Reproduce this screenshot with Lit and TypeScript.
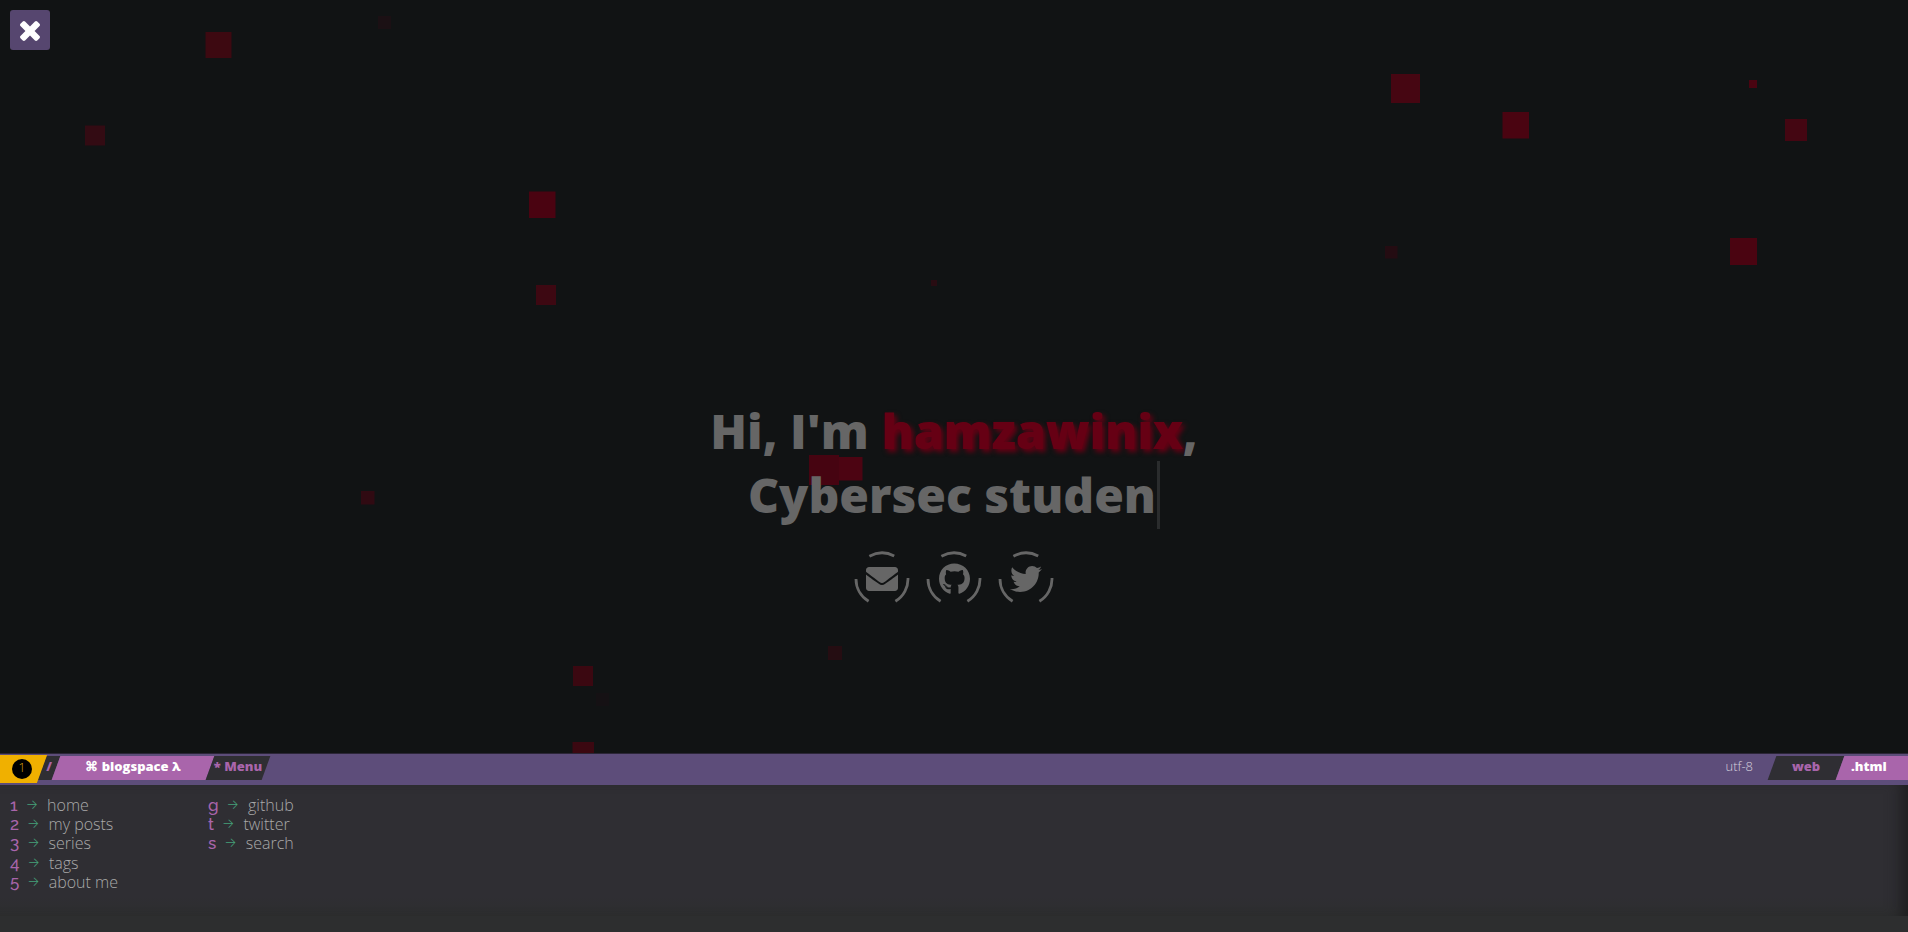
import { LitElement, html, css, svg } from "lit";
import { customElement } from "lit/decorators.js";

interface Particle { x: number; y: number; size: number; fill: string; }
interface MenuEntry { key: string; label: string; href: string; }

const PARTICLES: Particle[] = [
  { x: 205.5, y: 32, size: 26, fill: "#3d0911" },
  { x: 85, y: 125.5, size: 20, fill: "#330b13" },
  { x: 378, y: 16, size: 13, fill: "#1b1014" },
  { x: 529, y: 191.5, size: 26.5, fill: "#4a0311" },
  { x: 536, y: 285, size: 20, fill: "#3d0812" },
  { x: 931, y: 280, size: 6, fill: "#280c12" },
  { x: 1391, y: 74, size: 29, fill: "#460612" },
  { x: 1502.5, y: 112, size: 26.5, fill: "#4a0411" },
  { x: 1749, y: 80, size: 8, fill: "#4a0411" },
  { x: 1785, y: 119, size: 22, fill: "#440612" },
  { x: 1385, y: 246, size: 12.5, fill: "#240c12" },
  { x: 1730, y: 238, size: 27, fill: "#4a0411" },
  { x: 809, y: 455, size: 30, fill: "#460411" },
  { x: 839, y: 457, size: 23.5, fill: "#4c0412" },
  { x: 361, y: 491, size: 13.5, fill: "#300a12" },
  { x: 573, y: 666, size: 20, fill: "#3b0811" },
  { x: 596, y: 693, size: 13, fill: "#151114" },
  { x: 828, y: 646, size: 14, fill: "#250d12" },
  { x: 572.5, y: 742, size: 21.5, fill: "#3b0811" },
];

const PAGES: MenuEntry[] = [
  { key: "1", label: "home", href: "#home" },
  { key: "2", label: "my posts", href: "#posts" },
  { key: "3", label: "series", href: "#series" },
  { key: "4", label: "tags", href: "#tags" },
  { key: "5", label: "about me", href: "#about" },
];

const ACTIONS: MenuEntry[] = [
  { key: "g", label: "github", href: "#github" },
  { key: "t", label: "twitter", href: "#twitter" },
  { key: "s", label: "search", href: "#search" },
];

const CLOSE = "M1490 1322q0 40-28 68l-136 136q-28 28-68 28t-68-28l-294-294-294 294q-28 28-68 28t-68-28l-136-136q-28-28-28-68t28-68l294-294-294-294q-28-28-28-68t28-68l136-136q28-28 68-28t68 28l294 294 294-294q28-28 68-28t68 28l136 136q28 28 28 68t-28 68l-294 294 294 294q28 28 28 68z";

const SOCIAL = [
  {
    label: "Email",
    width: 512,
    path: "M502.3 190.8c3.9-3.1 9.7-.2 9.7 4.7V400c0 26.500-21.500 48-48 48H48c-26.500 0-48-21.500-48-48V195.600c0-5 5.700-7.800 9.700-4.700 22.400 17.400 52.100 39.500 154.100 113.600 21.100 15.400 56.700 47.800 92.200 47.600 35.700.300 72-32.800 92.300-47.600 102-74.100 131.600-96.300 154-113.700zM256 320c23.200.400 56.600-29.200 73.400-41.400 132.700-96.300 142.800-104.700 173.400-128.700 5.800-4.500 9.200-11.500 9.200-18.900v-19c0-26.500-21.500-48-48-48H48c-26.500 0-48 21.500-48 48v19c0 7.400 3.400 14.300 9.200 18.900 30.600 23.900 40.700 32.400 173.400 128.700 16.800 12.200 50.200 41.800 73.400 41.400z",
  },
  {
    label: "GitHub",
    width: 496,
    path: "M165.9 397.4c0 2-2.3 3.6-5.2 3.6-3.3.3-5.6-1.3-5.6-3.6 0-2 2.3-3.6 5.2-3.6 3-.3 5.6 1.3 5.6 3.6zm-31.100-4.500c-.7 2 1.300 4.300 4.300 4.900 2.600 1 5.600 0 6.200-2s-1.300-4.300-4.300-5.200c-2.600-.7-5.500.300-6.200 2.300zm44.200-1.700c-2.900.7-4.900 2.600-4.600 4.900.300 2 2.900 3.300 5.900 2.600 2.900-.7 4.900-2.600 4.600-4.600-.300-1.900-3-3.200-5.900-2.900zM244.800 8C106.100 8 0 113.300 0 252c0 110.900 69.800 205.800 169.500 239.200 12.800 2.300 17.300-5.600 17.300-12.100 0-6.200-.3-40.400-.3-61.400 0 0-70 15-84.700-29.800 0 0-11.400-29.100-27.800-36.600 0 0-22.900-15.700 1.600-15.400 0 0 24.900 2 38.600 25.800 21.900 38.600 58.600 27.500 72.900 20.900 2.300-16 8.800-27.100 16-33.700-55.900-6.200-112.300-14.300-112.300-110.500 0-27.500 7.600-41.300 23.600-58.900-2.600-6.500-11.100-33.300 2.600-67.900 20.900-6.500 69 27 69 27 20-5.600 41.500-8.500 62.800-8.500s42.800 2.900 62.800 8.500c0 0 48.100-33.600 69-27 13.700 34.700 5.200 61.400 2.600 67.900 16 17.700 25.800 31.500 25.800 58.900 0 96.500-58.900 104.200-114.800 110.500 9.200 7.900 17 22.900 17 46.400 0 33.700-.3 75.400-.3 83.600 0 6.500 4.600 14.400 17.300 12.100C428.200 457.800 496 362.900 496 252 496 113.300 383.500 8 244.800 8zM97.200 352.900c-1.300 1-1 3.300.7 5.200 1.600 1.600 3.900 2.300 5.200 1 1.300-1 1-3.300-.7-5.200-1.600-1.600-3.900-2.300-5.200-1zm-10.800-8.100c-.7 1.300.3 2.900 2.300 3.900 1.600 1 3.600.7 4.300-.7.7-1.300-.3-2.900-2.300-3.900-2-.6-3.600-.3-4.300.7zm32.400 35.600c-1.600 1.300-1 4.300 1.300 6.200 2.300 2.300 5.200 2.600 6.500 1 1.300-1.300.7-4.300-1.300-6.200-2.200-2.300-5.200-2.600-6.500-1zm-11.400-14.700c-1.600 1-1.600 3.600 0 5.900 1.600 2.300 4.300 3.300 5.600 2.300 1.600-1.300 1.600-3.900 0-6.200-1.400-2.300-4-3.300-5.600-2z",
  },
  {
    label: "Twitter",
    width: 512,
    path: "M459.37 151.716c.325 4.548.325 9.097.325 13.645 0 138.720-105.583 298.558-298.558 298.558-59.452 0-114.680-17.219-161.137-47.106 8.447.974 16.568 1.299 25.340 1.299 49.055 0 94.213-16.568 130.274-44.832-46.132-.975-84.792-31.188-98.112-72.772 6.498.974 12.995 1.624 19.818 1.624 9.421 0 18.843-1.300 27.614-3.573-48.081-9.747-84.143-51.980-84.143-102.985v-1.299c13.969 7.797 30.214 12.670 47.431 13.319-28.264-18.843-46.781-51.005-46.781-87.391 0-19.492 5.197-37.360 14.294-52.954 51.655 63.675 129.300 105.258 216.365 109.807-1.624-7.797-2.599-15.918-2.599-24.040 0-57.828 46.782-104.934 104.934-104.934 30.213 0 57.502 12.670 76.670 33.137 23.715-4.548 46.456-13.320 66.599-25.340-7.798 24.366-24.366 44.833-46.132 57.827 21.117-2.273 41.584-8.122 60.426-16.243-14.292 20.791-32.161 39.308-52.628 54.253z",
  },
];

@customElement("app-root")
export class AppRoot extends LitElement {
  static styles = css`
    :host {
      display: grid;
      grid-template-rows: 1fr auto;
      min-height: 100vh;
      position: relative;
      background: #111314;
      font-family: "Open Sans", sans-serif;
    }
    * { box-sizing: border-box; }
    a { color: inherit; text-decoration: none; }
    .particles {
      position: absolute;
      inset: 0;
      width: 100%;
      height: 100%;
    }
    .close {
      position: absolute;
      top: 10px;
      left: 10px;
      width: 40px;
      height: 40px;
      display: grid;
      place-items: center;
      padding: 2px 0 0;
      border: 0;
      border-radius: 3px;
      background: #56466f;
      color: #fff;
    }
    .close svg { width: 20px; height: 20px; fill: currentColor; }
    .hero {
      position: relative;
      display: flex;
      flex-direction: column;
      align-items: center;
      justify-content: flex-end;
      padding-bottom: 146px;
      color: #666;
    }
    h1 {
      margin: 0 0 22px;
      font-size: 48px;
      line-height: 64px;
      font-weight: 800;
      text-align: center;
    }
    .name { color: #660014; text-shadow: 3px 3px 5px #660014; }
    .typed {
      display: block;
      width: fit-content;
      margin: -2px auto 0;
      padding: 2px 1px 2px 0;
      border-right: 3px solid #2a2c2d;
    }
    .social { display: flex; gap: 16px; }
    .social a {
      display: grid;
      place-items: center;
      width: 56px;
      height: 56px;
    }
    .social svg { grid-area: 1 / 1; }
    .ring { width: 56px; height: 56px; fill: none; stroke: #666; stroke-width: 2.8; }
    .glyph { height: 32px; fill: #666; }

    .menu { position: relative; background: #2d2e2f; padding-bottom: 16px; }
    .bar {
      display: flex;
      align-items: flex-start;
      height: 32px;
      padding-top: 2px;
      border-top: 1px solid #2c2638;
      background: #5d4d7a;
      font-size: 13px;
      line-height: 20px;
      font-weight: 800;
      overflow: hidden;
    }
    .seg {
      position: relative;
      z-index: 0;
      height: 24px;
      display: flex;
      justify-content: center;
      color: #a965ab;
    }
    .seg::before {
      content: "";
      position: absolute;
      inset: 0;
      z-index: -1;
      transform: skewX(-20deg);
      background: #2f2e33;
    }
    .pink { color: #fff; }
    .pink::before { background: #a965ab; }
    .count { width: 42px; height: 28px; padding: 4px 0 0 12px; justify-content: flex-start; margin-top: -1px; z-index: 1; }
    .count::before { background: #f0b000; left: -12px; }
    .badge {
      width: 20px;
      height: 20px;
      border-radius: 50%;
      background: #000;
      color: #d99f0c;
      font-weight: 300;
      line-height: 16px;
      text-align: center;
    }
    .slash { width: 14px; }
    .blog { width: 154px; }
    .current { width: 56px; }
    .fill { flex: 1; }
    .enc { color: #d5d0dd; font-weight: 300; margin-right: 19px; }
    .mode { width: 68px; }
    .ext { width: 68px; justify-content: flex-start; padding-left: 11px; }
    .ext::before { right: -12px; }

    .panel {
      display: flex;
      height: 131px;
      padding: 11px 10px 0;
      background: linear-gradient(#2f2e33 85%, #2d2e2f);
      box-shadow: inset -16px 0 16px -10px #1d1d1e;
      color: #a9a9a9;
      font-size: 16px;
      line-height: 1.2;
      font-weight: 300;
    }
    ul { margin: 0; padding: 0; list-style: none; width: 198px; }
    li a { display: flex; }
    .key, .arrow { height: 19px; line-height: 19px; }
    .key { font-family: "Raleway", "Lato", sans-serif; font-size: 17px; font-weight: 500; color: #a965ab; margin-right: 8px; }
    .arrow { font-family: "Inter", sans-serif; font-size: 13px; line-height: 17px; font-weight: 300; color: #45a07a; margin-right: 9px; }
  `;

  private entries(list: MenuEntry[]) {
    return html`<ul>
      ${list.map((e) => html`<li><a href=${e.href}><span class="key">${e.key}</span><span class="arrow">→</span><span>${e.label}</span></a></li>`)}
    </ul>`;
  }

  render() {
    return html`
      <svg class="particles" aria-hidden="true">
        ${PARTICLES.map((p) => svg`<rect x=${p.x} y=${p.y} width=${p.size} height=${p.size} fill=${p.fill}></rect>`)}
      </svg>
      <main class="hero">
        <h1>Hi, I'm <span class="name">hamzawinix</span>,<span class="typed">Cybersec studen</span></h1>
        <nav class="social" aria-label="Social">
          ${SOCIAL.map((s) => html`<a href="#" aria-label=${s.label}>
            <svg class="ring" viewBox="-28 -28 56 56">
              <path d="M-12.600-22.700A26 26 0 0 1 12.200-23M26-1A26 26 0 0 1 13.400 22.300M-26 0A26 26 0 0 0-13.400 22.300"></path>
            </svg>
            <svg class="glyph" viewBox="0 0 ${s.width} 512"><path d=${s.path}></path></svg>
          </a>`)}
        </nav>
      </main>
      <footer class="menu">
        <div class="bar">
          <span class="seg count"><span class="badge">1</span></span>
          <span class="seg slash">/</span>
          <span class="seg pink blog">⌘ blogspace λ</span>
          <span class="seg current">* Menu</span>
          <span class="fill"></span>
          <span class="enc">utf-8</span>
          <span class="seg mode">web</span>
          <span class="seg pink ext">.html</span>
        </div>
        <nav class="panel" aria-label="Menu">
          ${this.entries(PAGES)}
          ${this.entries(ACTIONS)}
        </nav>
      </footer>
      <button class="close" aria-label="Close menu">
        <svg viewBox="302 366 1188 1188"><path d=${CLOSE}></path></svg>
      </button>
    `;
  }
}
